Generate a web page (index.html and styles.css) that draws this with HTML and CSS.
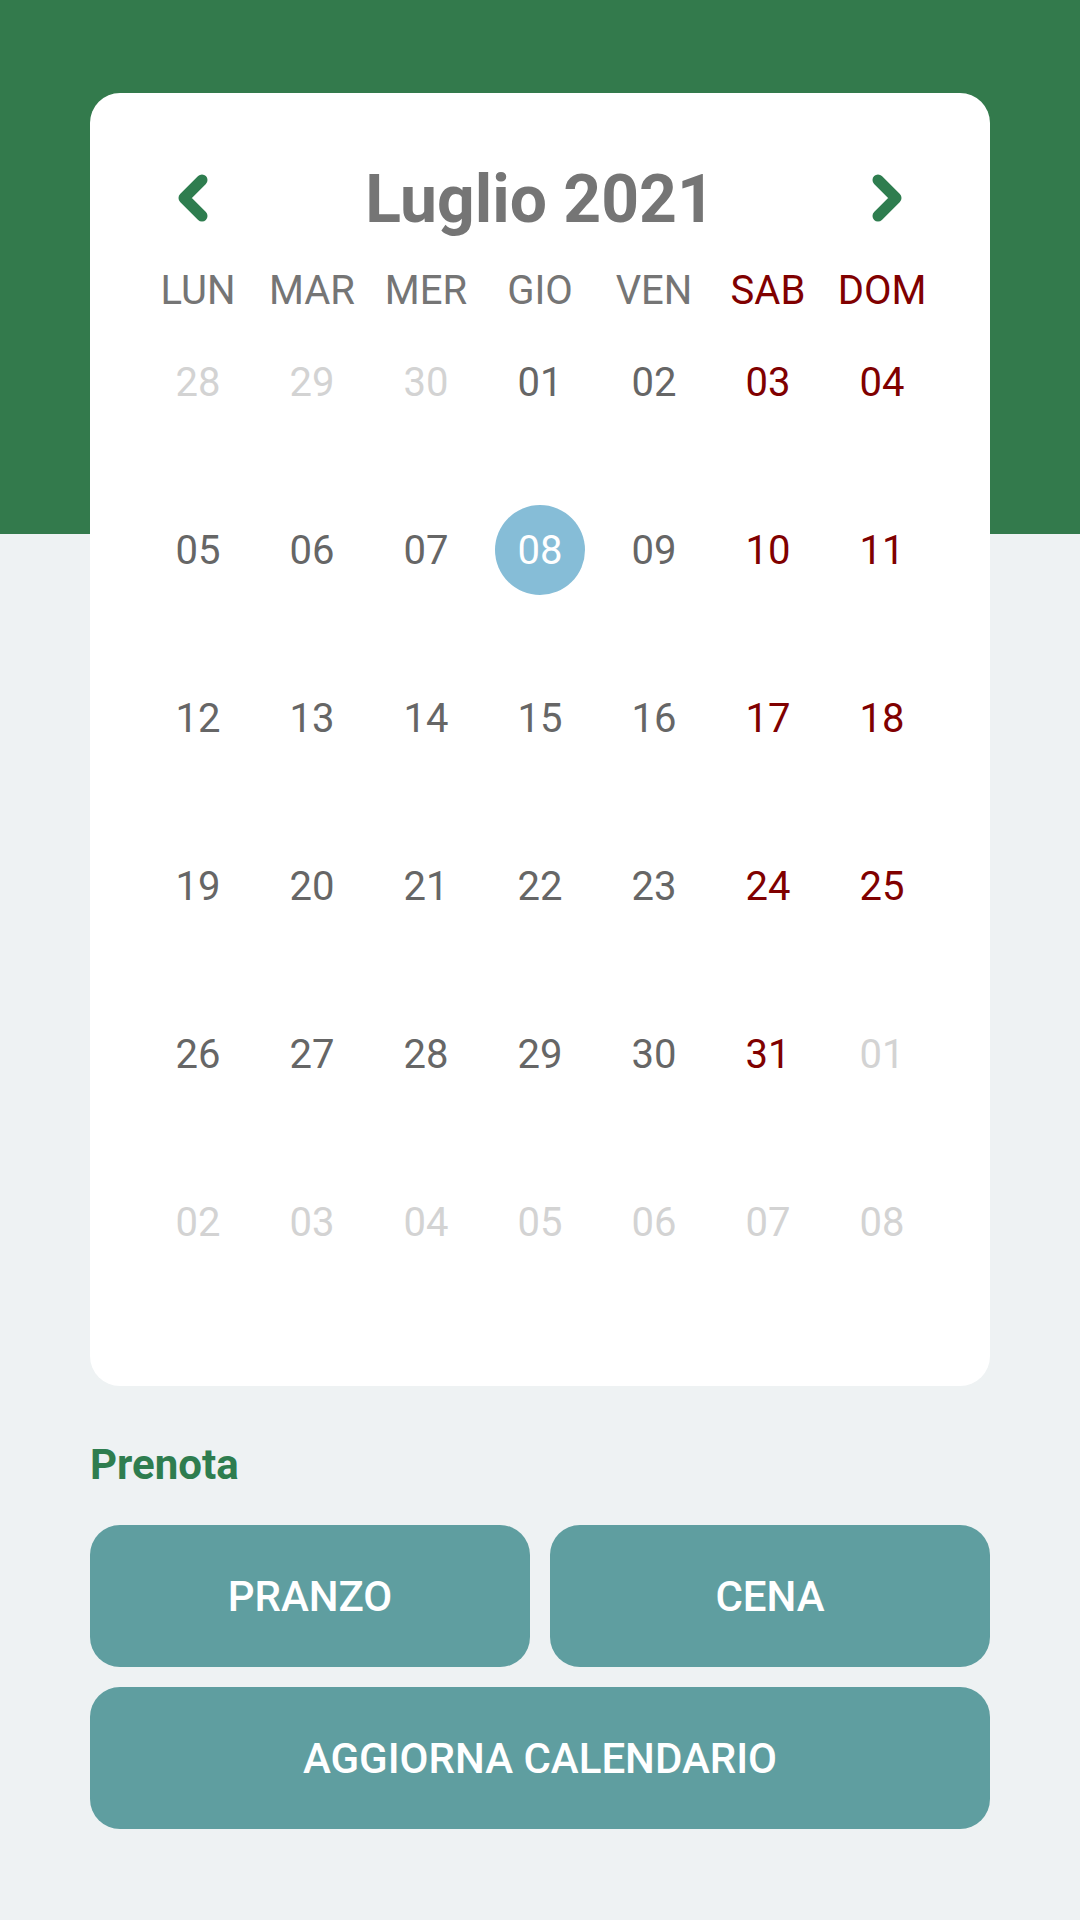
FILE: index.html
```html
<!DOCTYPE html>
<html lang="it">
<head>
  <meta charset="UTF-8" />
  <meta name="viewport" content="width=device-width, initial-scale=1" />
  <title>Prenota</title>
  <link rel="stylesheet" href="styles.css">
</head>
<body>
  <main class="page">
    <section class="calendar" aria-label="Calendario">
      <div class="cal-header">
        <button class="nav-btn" aria-label="Mese precedente">
          <svg width="114" height="90" viewBox="0 0 114 90"><path d="M61 25 L43 43 L61 61" /></svg>
        </button>
        <h1 class="month">Luglio 2021</h1>
        <button class="nav-btn" aria-label="Mese successivo">
          <svg width="114" height="90" viewBox="0 0 114 90"><path d="M53 25 L71 43 L53 61" /></svg>
        </button>
      </div>

      <div class="weekdays">
        <span>LUN</span><span>MAR</span><span>MER</span><span>GIO</span><span>VEN</span>
        <span class="weekend">SAB</span><span class="weekend">DOM</span>
      </div>

      <div class="days">
        <span class="day other">28</span><span class="day other">29</span><span class="day other">30</span>
        <span class="day">01</span><span class="day">02</span><span class="day weekend">03</span><span class="day weekend">04</span>

        <span class="day">05</span><span class="day">06</span><span class="day">07</span>
        <span class="day selected">08</span><span class="day">09</span><span class="day weekend">10</span><span class="day weekend">11</span>

        <span class="day">12</span><span class="day">13</span><span class="day">14</span>
        <span class="day">15</span><span class="day">16</span><span class="day weekend">17</span><span class="day weekend">18</span>

        <span class="day">19</span><span class="day">20</span><span class="day">21</span>
        <span class="day">22</span><span class="day">23</span><span class="day weekend">24</span><span class="day weekend">25</span>

        <span class="day">26</span><span class="day">27</span><span class="day">28</span>
        <span class="day">29</span><span class="day">30</span><span class="day weekend">31</span><span class="day other">01</span>

        <span class="day other">02</span><span class="day other">03</span><span class="day other">04</span>
        <span class="day other">05</span><span class="day other">06</span><span class="day other">07</span><span class="day other">08</span>
      </div>
    </section>

    <h2 class="section-title">Prenota</h2>

    <div class="actions">
      <button class="action">PRANZO</button>
      <button class="action">CENA</button>
      <button class="action wide">AGGIORNA CALENDARIO</button>
    </div>
  </main>
</body>
</html>
```

FILE: styles.css
```css
/* Reset */
*, *::before, *::after {
  box-sizing: border-box;
}

body {
  margin: 0;
  min-height: 100vh;
  background: linear-gradient(to bottom, #337a4c 0, #337a4c 534px, #eef2f3 534px);
  font-family: Roboto, 'Noto Sans', sans-serif;
  color: #666;
}

.page {
  padding: 93px 90px 0;
}

/* Calendar card */
.calendar {
  background: #fff;
  border-radius: 30px;
  padding: 62px 51px 119px;
}

.cal-header {
  display: grid;
  grid-template-columns: 114px 1fr 114px;
  align-items: center;
  height: 90px;
}

.nav-btn {
  padding: 0;
  border: none;
  background: none;
  cursor: pointer;
  display: block;
  height: 90px;
}
.nav-btn svg {
  display: block;
}
.nav-btn path {
  fill: none;
  stroke: #2e7d4f;
  stroke-width: 11;
  stroke-linecap: round;
  stroke-linejoin: round;
}

.month {
  margin: 0;
  text-align: center;
  font-size: 66px;
  font-weight: 700;
  line-height: 90px;
  color: #757575;
}

.weekdays,
.days {
  display: grid;
  grid-template-columns: repeat(7, 114px);
}

.weekdays {
  margin-top: 23px;
  font-size: 40px;
  line-height: 46px;
  color: #757575;
  text-align: center;
}

.weekdays .weekend {
  color: #800000;
}

.days {
  margin-top: 23px;
  row-gap: 78px;
}

.day {
  height: 90px;
  display: flex;
  align-items: center;
  justify-content: center;
  font-size: 40px;
  color: #666;
}
.day.weekend {
  color: #800000;
}
.day.other {
  color: #d3d3d3;
}
.day.selected {
  width: 90px;
  justify-self: center;
  border-radius: 50%;
  background: #86bdd7;
  color: #fff;
}

/* Booking */
.section-title {
  margin: 54px 0 0;
  font-size: 42px;
  font-weight: 700;
  line-height: 50px;
  color: #2e7d4f;
}

.actions {
  margin-top: 35px;
  display: grid;
  grid-template-columns: 1fr 1fr;
  gap: 20px;
}

.action {
  height: 142px;
  border: none;
  border-radius: 30px;
  background: #5f9ea0;
  color: #fff;
  font-family: inherit;
  font-size: 42px;
  font-weight: 500;
  cursor: pointer;
}
.action.wide {
  grid-column: 1 / -1;
}
```
